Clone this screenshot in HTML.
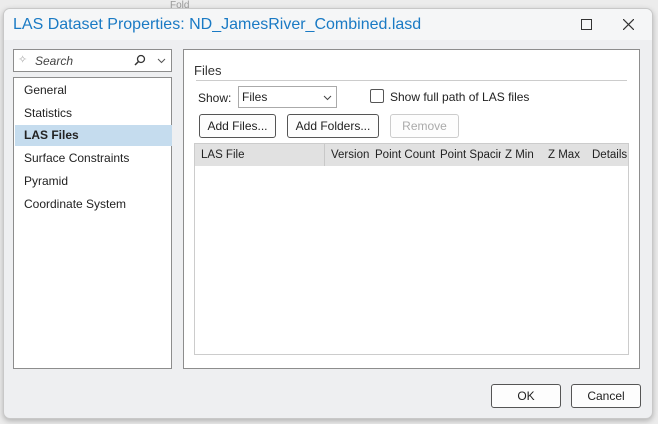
<!DOCTYPE html>
<html><head><style>
body{margin:0;width:658px;height:424px;background:#ececec;position:relative;overflow:hidden;font-family:"Liberation Sans",sans-serif;font-size:12px;color:#222}
.dlg{position:absolute;left:3px;top:8px;width:648px;height:409px;background:#eeeff1;border:1px solid #c8c8c8;border-radius:7px;box-shadow:0 2px 6px rgba(0,0,0,.25);overflow:hidden}
.tb{position:absolute;left:0;top:0;right:0;height:31px;background:#f5f6f7}
.title{position:absolute;left:9px;top:7px;font-size:16px;color:#1a7ac4}
.a{position:absolute}
.box{position:absolute;background:#fff;border:1px solid #8d8d8d}
.btn{position:absolute;height:22px;border:1px solid #555;border-radius:3px;background:#fdfdfd;text-align:center;line-height:22px;font-size:12px}
.item{position:absolute;left:1px;width:157px;height:21px;line-height:21px;padding-left:9px;box-sizing:border-box}
.th{position:absolute;top:5px;font-size:11.5px}
</style></head><body>
<div class="a" style="left:170px;top:0;font-size:10px;color:#999">Fold</div>
<div class="dlg">
<div class="tb"><div class="title">LAS Dataset Properties: ND_JamesRiver_Combined.lasd</div>
<div class="a" style="left:577px;top:10px;width:9px;height:9px;border:1px solid #333"></div>
<svg class="a" style="left:619px;top:10px" width="11" height="11"><path d="M0 0L11 11M11 0L0 11" stroke="#333" stroke-width="1.2"/></svg>
</div>
<div class="box" style="left:9px;top:40px;width:157px;height:21px">
<span class="a" style="left:4px;top:3px;color:#aaa;font-size:11px">✧</span>
<span class="a" style="left:21px;top:4px;font-style:italic;color:#444">Search</span>
<svg class="a" style="left:120px;top:4px" width="12" height="12"><circle cx="7" cy="5" r="3.5" fill="none" stroke="#333" stroke-width="1.3"/><path d="M4.5 7.5L1 11" stroke="#333" stroke-width="1.5"/></svg>
<svg class="a" style="left:143px;top:8px" width="9" height="6"><path d="M1 1L4.5 4.5L8 1" fill="none" stroke="#555"/></svg>
</div>
<div class="box" style="left:9px;top:68px;width:157px;height:290px">
<div class="item" style="top:2px">General</div>
<div class="item" style="top:25px">Statistics</div>
<div class="item" style="top:47px;background:#c5dcee;font-weight:bold">LAS Files</div>
<div class="item" style="top:70px">Surface Constraints</div>
<div class="item" style="top:93px">Pyramid</div>
<div class="item" style="top:116px">Coordinate System</div>
</div>
<div class="box" style="left:179px;top:40px;width:455px;height:318px">
<div class="a" style="left:10px;top:13px;font-size:13px;color:#333">Files</div>
<div class="a" style="left:12px;top:30px;width:431px;height:1px;background:#ccc"></div>
<div class="a" style="left:14px;top:41px">Show:</div>
<div class="a" style="left:54px;top:36px;width:97px;height:20px;border:1px solid #aaa;background:#fff"><span class="a" style="left:3px;top:3px">Files</span>
<svg class="a" style="left:84px;top:8px" width="9" height="6"><path d="M1 1L4.5 4.5L8 1" fill="none" stroke="#444"/></svg></div>
<div class="a" style="left:186px;top:39px;width:12px;height:12px;border:1px solid #555;border-radius:2px;background:#fff"></div>
<div class="a" style="left:206px;top:40px">Show full path of LAS files</div>
<div class="btn" style="left:15px;top:64px;width:75px">Add Files...</div>
<div class="btn" style="left:103px;top:64px;width:90px">Add Folders...</div>
<div class="btn" style="left:206px;top:64px;width:67px;border-color:#ccc;color:#aaa">Remove</div>
<div class="a" style="left:10px;top:93px;width:433px;height:210px;border:1px solid #ccc;background:#fff">
<div class="a" style="left:0;top:0;width:433px;height:22px;background:#e1e1e1">
<div class="a" style="left:129px;top:0;width:1px;height:22px;background:#c8c8c8"></div>
<span class="th" style="left:6px">LAS File</span>
<span class="th" style="left:136px">Version</span>
<span class="th" style="left:180px;width:60px;overflow:hidden;white-space:nowrap">Point Count</span>
<span class="th" style="left:245px;width:61px;overflow:hidden;white-space:nowrap">Point Spacing</span>
<span class="th" style="left:310px">Z Min</span>
<span class="th" style="left:353px">Z Max</span>
<span class="th" style="left:397px">Details</span>
</div></div>
</div>
<div class="btn" style="left:487px;top:375px;width:68px">OK</div>
<div class="btn" style="left:567px;top:375px;width:68px">Cancel</div>
</div>
</body></html>
